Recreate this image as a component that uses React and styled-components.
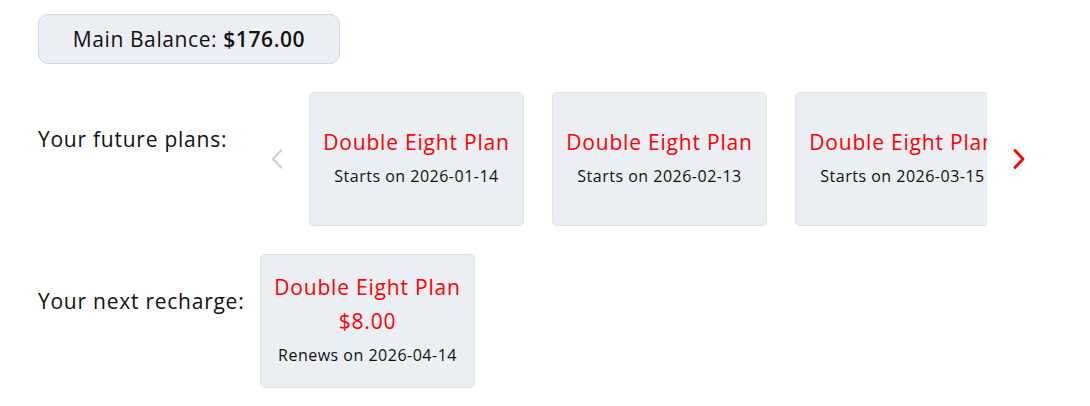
import React from "react";
import styled, { createGlobalStyle } from "styled-components";

const Global = createGlobalStyle`
  html, body { margin: 0; padding: 0; background: #ffffff; }
  body { font-family: "Open Sans", "Noto Sans", sans-serif; color: #000; }
  * { box-sizing: border-box; }
`;

const Page = styled.div`
  padding: 14px 0 0 38px;
  width: 1090px;
`;

const BalanceBox = styled.div`
  width: 302px;
  height: 50px;
  border: 1px solid #cfd7e2;
  border-radius: 10px;
  background: #ebeef3;
  display: flex;
  align-items: center;
  justify-content: center;
  font-size: 21px;
  letter-spacing: 0.6px;
  color: #111;
  b { font-weight: 600; margin-left: 6px; }
`;

const Row = styled.div`
  display: flex;
  align-items: flex-start;
  margin-top: 28px;
`;

const Label = styled.div`
  width: ${(p) => p.$w}px;
  flex: none;
  padding-top: 33px;
  font-size: 21px;
  letter-spacing: 0.75px;
  line-height: 28px;
  color: #111;
`;

const ArrowButton = styled.button`
  flex: none;
  align-self: center;
  background: none;
  border: none;
  padding: 0;
  margin: 0 ${(p) => p.$mr}px 0 ${(p) => p.$ml}px;
  width: 14px;
  height: 20px;
  display: flex;
  align-items: center;
  justify-content: center;
  cursor: pointer;
  color: ${(p) => (p.$active ? "#ff0000" : "#d0d0d0")};
`;

const Viewport = styled.div`
  width: 678px;
  overflow: hidden;
  flex: none;
`;

const Track = styled.div`
  display: flex;
  gap: 28px;
`;

const Card = styled.div`
  width: 215px;
  height: 134px;
  flex: none;
  background: #ebeef2;
  border: 1px solid #dfe3e8;
  border-radius: 5px;
  display: flex;
  flex-direction: column;
  align-items: center;
  justify-content: center;
  text-align: center;
  white-space: nowrap;
`;

const Title = styled.div`
  color: #ff0000;
  font-size: 21px;
  letter-spacing: 0.8px;
  line-height: 34px;
`;

const Sub = styled.div`
  color: #111;
  font-size: 16px;
  letter-spacing: 0.5px;
  line-height: 34px;
`;

const Chevron = ({ dir }) => (
  <svg width="14" height="20" viewBox="0 0 14 20" fill="none">
    <polyline
      points={dir === "left" ? "11,1.5 3,10 11,18.5" : "3,1.5 11,10 3,18.5"}
      stroke="currentColor"
      strokeWidth={dir === "left" ? 2.2 : 2.8}
      strokeLinecap="round"
      strokeLinejoin="round"
    />
  </svg>
);

const plans = ["2026-01-14", "2026-02-13", "2026-03-15"];

export default function App() {
  return (
    <>
      <Global />
      <Page>
        <BalanceBox>
          Main Balance: <b>$176.00</b>
        </BalanceBox>
        <Row>
          <Label $w={232}>Your future plans:</Label>
          <ArrowButton $ml={0} $mr={25} aria-label="Previous">
            <Chevron dir="left" />
          </ArrowButton>
          <Viewport>
            <Track>
              {plans.map((d) => (
                <Card key={d}>
                  <Title>Double Eight Plan</Title>
                  <Sub>Starts on {d}</Sub>
                </Card>
              ))}
            </Track>
          </Viewport>
          <ArrowButton $ml={25} $mr={0} $active aria-label="Next">
            <Chevron dir="right" />
          </ArrowButton>
        </Row>
        <Row>
          <Label $w={222}>Your next recharge:</Label>
          <Card>
            <Title>Double Eight Plan</Title>
            <Title>$8.00</Title>
            <Sub>Renews on 2026-04-14</Sub>
          </Card>
        </Row>
      </Page>
    </>
  );
}
